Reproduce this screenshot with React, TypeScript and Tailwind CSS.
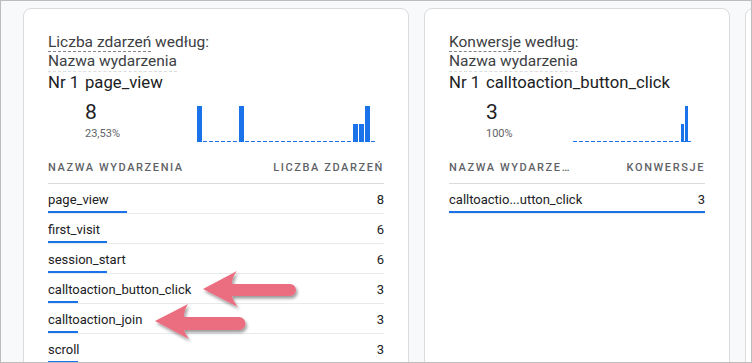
import React from "react";

type Row = { name: string; value: number };

const Spark = ({
  slots,
  slotClass,
  barClass,
  widthClass,
  bars,
}: {
  slots: number;
  slotClass: string;
  barClass: string;
  widthClass: string;
  bars: Record<number, number>;
}) => (
  <div className={`relative flex h-[36px] items-end ${widthClass}`}>
    <div className="absolute bottom-0 left-0 right-0 h-[1.5px] bg-[repeating-linear-gradient(90deg,#1a73e8_0_4px,transparent_4px_6px)]" />
    {Array.from({ length: slots }).map((_, i) => (
      <div key={i} className={`relative flex h-full items-end ${slotClass}`}>
        {bars[i] ? (
          <div className={`bg-[#1a73e8] ${barClass}`} style={{ height: bars[i] }} />
        ) : null}
      </div>
    ))}
  </div>
);

const Card = ({
  width,
  metric,
  top,
  value,
  pct,
  leftW,
  chart,
  colA,
  colB,
  rows,
  total,
}: {
  width: string;
  metric: string;
  top: string;
  value: string;
  pct: string;
  leftW: string;
  chart: React.ReactNode;
  colA: string;
  colB: string;
  rows: Row[];
  total: number;
}) => (
  <div className={`h-[400px] shrink-0 rounded-lg border border-[#dadce0] bg-white px-6 pt-6 ${width}`}>
    <div className="text-[15.5px] leading-[19px] text-[#3c4043]">
      <span className="border-b border-dashed border-[#80868b]">{metric}</span> według:
    </div>
    <div className="text-[15.5px] leading-[19px] text-[#3c4043]">
      <span className="inline-block border-b border-dashed border-[#dadce0]">Nazwa wydarzenia</span>
    </div>
    <div className="flex text-[16.7px] leading-[21px] text-[#202124]">
      <span className="w-[37px] shrink-0">Nr 1</span>
      <span>{top}</span>
    </div>
    <div className="mt-[5px] flex items-end">
      <div className={`shrink-0 pl-[37px] ${leftW}`}>
        <div className="text-[21px] leading-[28px] text-[#202124]">{value}</div>
        <div className="text-[11px] leading-4 text-[#5f6368]">{pct}</div>
      </div>
      {chart}
    </div>
    <div className="mt-[18px] flex justify-between border-b border-[#dadce0] pb-[7px] text-[11px] font-medium leading-4 tracking-[1.6px] text-[#5f6368]">
      <span>{colA}</span>
      <span>{colB}</span>
    </div>
    {rows.map((r) => (
      <div key={r.name} className="flex flex-col border-b border-[#e8eaed] pt-2">
        <div className="flex h-4 justify-between text-[13px] leading-4 text-[#202124]">
          <span>{r.name}</span>
          <span>{r.value}</span>
        </div>
        <div className="mt-[3px] h-[2px] bg-[#1a73e8]" style={{ width: `${(r.value / total) * 100}%` }} />
      </div>
    ))}
  </div>
);

export default function App() {
  const events: Row[] = [
    { name: "page_view", value: 8 },
    { name: "first_visit", value: 6 },
    { name: "session_start", value: 6 },
    { name: "calltoaction_button_click", value: 3 },
    { name: "calltoaction_join", value: 3 },
    { name: "scroll", value: 3 },
  ];

  return (
    <div className="relative h-[363px] w-[752px] overflow-hidden border border-[#bdbdbd] bg-[#f8f9fa] font-['Roboto',sans-serif]">
      <div className="flex gap-[15px] pl-[22px] pt-[7px]">
        <Card
          width="w-[386px]"
          metric="Liczba zdarzeń"
          top="page_view"
          value="8"
          pct="23,53%"
          leftW="w-[149px]"
          chart={
            <Spark
              slots={30}
              slotClass="w-[6px]"
              barClass="w-[5px]"
              widthClass="w-[180px]"
              bars={{ 0: 36, 7: 36, 26: 18, 27: 18, 28: 36 }}
            />
          }
          colA="NAZWA WYDARZENIA"
          colB="LICZBA ZDARZEŃ"
          rows={events}
          total={34}
        />
        <Card
          width="w-[306px]"
          metric="Konwersje"
          top="calltoaction_button_click"
          value="3"
          pct="100%"
          leftW="w-[124px]"
          chart={
            <Spark
              slots={30}
              slotClass="w-[4px]"
              barClass="w-[3px]"
              widthClass="w-[120px]"
              bars={{ 27: 18, 28: 36 }}
            />
          }
          colA="NAZWA WYDARZE…"
          colB="KONWERSJE"
          rows={[{ name: "calltoactio...utton_click", value: 3 }]}
          total={3}
        />
        <div className="h-[400px] w-[300px] shrink-0 rounded-lg border border-[#dadce0] bg-white" />
      </div>

      <svg
        className="pointer-events-none absolute left-[-1px] top-[-1px]"
        width="752"
        height="363"
        viewBox="0 0 752 363"
      >
        <defs>
          <filter id="sh" x="-20%" y="-40%" width="140%" height="180%">
            <feDropShadow dx="1.5" dy="2.5" stdDeviation="1.5" floodColor="#000" floodOpacity="0.4" />
          </filter>
        </defs>
        <g fill="#ea6e80" filter="url(#sh)">
          <path d="M203,289 L237,271 Q232,277 232,284 L290,284 A6,6 0 0 1 290,296 L232,296 Q233,301 238,307 Z" />
          <path d="M155,321 L188,304 Q184,310 184,317 L239,317 A6.5,6.5 0 0 1 239,330 L184,330 Q185,334 189,339 Z" />
        </g>
      </svg>
    </div>
  );
}
